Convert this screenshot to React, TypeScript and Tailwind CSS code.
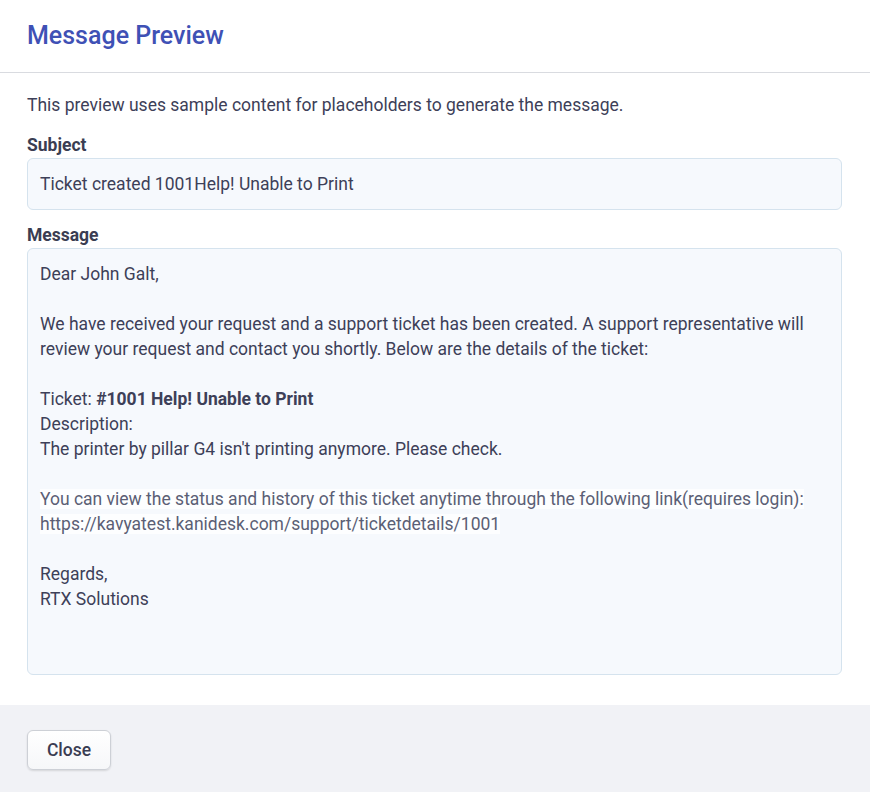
import React from 'react';

const lineMuted = 'text-[#5b5f75] bg-[#fdfeff]';

export default function App() {
  return (
    <div className="w-[870px] h-[792px] bg-white flex flex-col font-['Roboto',sans-serif] text-[#3d4058]">
      <div className="h-[73px] shrink-0 border-b border-[#d9dbe0] px-[27px] flex items-center">
        <h1 className="text-[25px] font-medium text-[#3f51b5] leading-none -mt-[1px]">Message Preview</h1>
      </div>

      <div className="flex-1 px-[27px] pt-[20px] pb-[30px]">
        <p className="text-[17.5px] leading-[24px]">
          This preview uses sample content for placeholders to generate the message.
        </p>

        <div className="mt-[16px]">
          <label className="block text-[17.5px] leading-[24px] font-bold text-[#3a3d52]">Subject</label>
          <div className="mt-[1px] w-[815px] border border-[#d5e3ee] bg-[#f6f9fd] rounded-[6px] px-[12px] pt-[13px] pb-[12px] text-[17.5px] leading-[25px]">
            Ticket created 1001Help! Unable to Print
          </div>
        </div>

        <div className="mt-[13px]">
          <label className="block text-[17.5px] leading-[24px] font-bold text-[#3a3d52]">Message</label>
          <div className="mt-[1px] w-[815px] h-[427px] border border-[#d5e3ee] bg-[#f6f9fd] rounded-[6px] px-[12px] pt-[13px] pb-[12px] text-[17.5px] leading-[25px]">
            <div>Dear John Galt,</div>
            <div>&nbsp;</div>
            <div>We have received your request and a support ticket has been created. A support representative will</div>
            <div>review your request and contact you shortly. Below are the details of the ticket:</div>
            <div>&nbsp;</div>
            <div>
              Ticket: <span className="font-bold">#1001 Help! Unable to Print</span>
            </div>
            <div>Description:</div>
            <div>The printer by pillar G4 isn't printing anymore. Please check.</div>
            <div>&nbsp;</div>
            <div>
              <span className={lineMuted}>
                You can view the status and history of this ticket anytime through the following link(requires login):
              </span>
            </div>
            <div>
              <span className={lineMuted}>https://kavyatest.kanidesk.com/support/ticketdetails/1001</span>
            </div>
            <div>&nbsp;</div>
            <div>Regards,</div>
            <div>RTX Solutions</div>
          </div>
        </div>
      </div>

      <div className="h-[87px] shrink-0 bg-[#f1f2f6] px-[27px] pt-[25px]">
        <button className="w-[84px] h-[40px] rounded-[6px] border border-[#cdd0d6] bg-gradient-to-b from-white to-[#f6f7f9] shadow-[0_1px_2px_rgba(0,0,0,0.12)] text-[17.5px] font-medium text-[#3a3d52]">
          Close
        </button>
      </div>
    </div>
  );
}
